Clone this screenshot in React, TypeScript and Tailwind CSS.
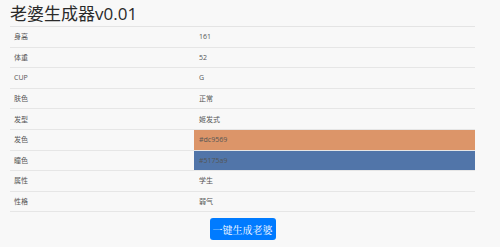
import React from 'react';

type Row = { label: string; value: string; color?: string };

const ROWS: Row[] = [
  { label: '身高', value: '161' },
  { label: '体重', value: '52' },
  { label: 'CUP', value: 'G' },
  { label: '肤色', value: '正常' },
  { label: '发型', value: '姬发式' },
  { label: '发色', value: '#dc9569', color: '#dc9569' },
  { label: '瞳色', value: '#5175a9', color: '#5175a9' },
  { label: '属性', value: '学生' },
  { label: '性格', value: '弱气' },
];

const App: React.FC = () => {
  return (
    <div className="w-[500px] h-[247px] bg-[#f8f8f8] overflow-hidden font-['Open_Sans','Noto_Sans_CJK_SC',sans-serif] text-[#333]">
      <div className="pl-[10px] pr-[25px]">
        <h1 className="h-[26px] pt-[4px] text-[17px] leading-[20px] font-normal text-[#2a2a2a]">老婆生成器v0.01</h1>

        <div className="border-t border-[#e4e4e4]">
          {ROWS.map((row, idx) => (
            <div key={idx} className="grid grid-cols-[184px_1fr] h-[20.6px] border-b border-[#e6e6e6] text-[7px] leading-none text-[#555]">
              <div className="flex items-center pl-[4px]">{row.label}</div>
              <div
                className="flex items-center pl-[5px]"
                style={row.color ? { backgroundColor: row.color } : undefined}
              >
                {row.value}
              </div>
            </div>
          ))}
        </div>

        <div className="flex justify-center pt-[6px]">
          <button className="w-[66px] h-[22px] rounded-[3px] bg-[#007bff] text-white text-[10px] font-['Noto_Serif_CJK_SC','Liberation_Serif',serif] flex items-center justify-center">
            一键生成老婆
          </button>
        </div>
      </div>
    </div>
  );
};

export default App;
